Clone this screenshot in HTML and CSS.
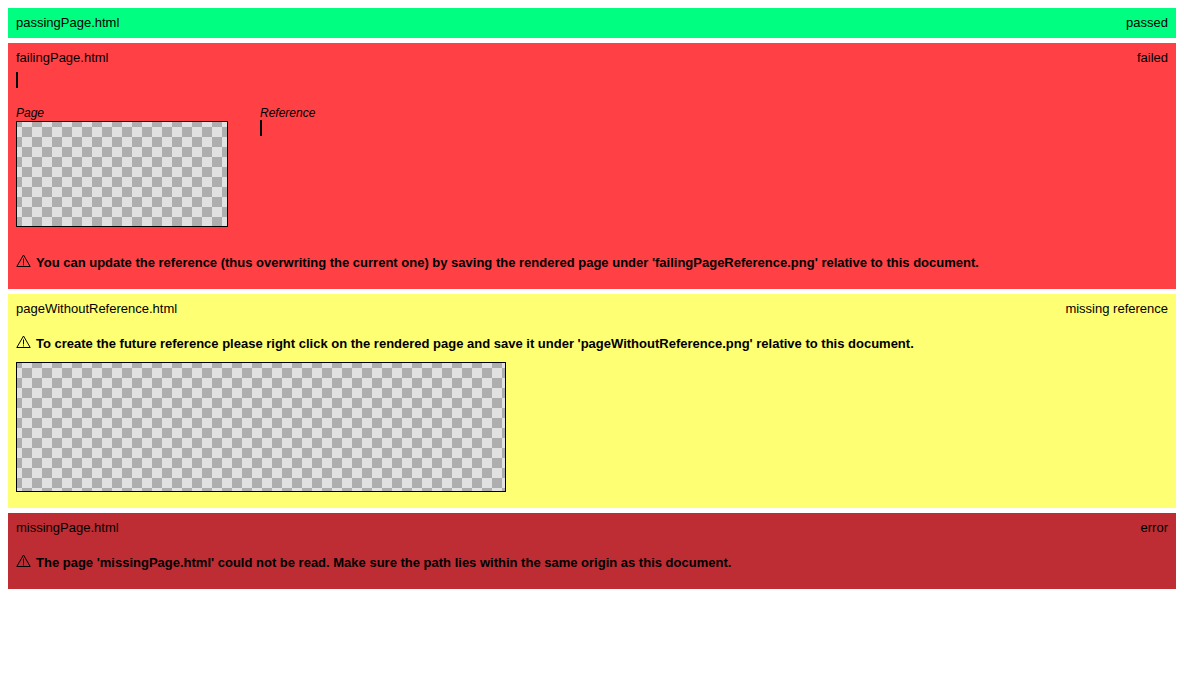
FILE: index.html
```html
<!DOCTYPE html>
<html lang="en">
<head>
<meta charset="utf-8">
<title>Test results</title>
<link rel="stylesheet" href="styles.css">
</head>
<body>
<main class="results">
  <section class="result passed">
    <header class="head"><span>passingPage.html</span><span>passed</span></header>
  </section>
  <section class="result failed">
    <header class="head"><span>failingPage.html</span><span>failed</span></header>
    <div class="diff"><div class="empty"></div></div>
    <div class="pair">
      <figure class="shot"><figcaption>Page</figcaption><div class="canvas small"></div></figure>
      <figure class="shot"><figcaption>Reference</figcaption><div class="empty"></div></figure>
    </div>
    <p class="note"><svg class="warn" viewBox="0 0 15 14" aria-hidden="true"><path d="M7.5 1 L14.2 12.5 H.8 Z M7.5 4.5 V9.5 M7.5 10.4 V11.4"/></svg><span>You can update the reference (thus overwriting the current one) by saving the rendered page under 'failingPageReference.png' relative to this document.</span></p>
  </section>
  <section class="result missing">
    <header class="head"><span>pageWithoutReference.html</span><span>missing reference</span></header>
    <p class="note"><svg class="warn" viewBox="0 0 15 14" aria-hidden="true"><path d="M7.5 1 L14.2 12.5 H.8 Z M7.5 4.5 V9.5 M7.5 10.4 V11.4"/></svg><span>To create the future reference please right click on the rendered page and save it under 'pageWithoutReference.png' relative to this document.</span></p>
    <div class="canvas large"></div>
  </section>
  <section class="result error">
    <header class="head"><span>missingPage.html</span><span>error</span></header>
    <p class="note"><svg class="warn" viewBox="0 0 15 14" aria-hidden="true"><path d="M7.5 1 L14.2 12.5 H.8 Z M7.5 4.5 V9.5 M7.5 10.4 V11.4"/></svg><span>The page 'missingPage.html' could not be read. Make sure the path lies within the same origin as this document.</span></p>
  </section>
</main>
</body>
</html>
```
FILE: styles.css
```css
* { box-sizing: border-box; }
body {
  margin: 8px;
  font: 13px/14px "Liberation Sans", Arial, sans-serif;
  color: #000;
  background: #fff;
}
.results { display: flex; flex-direction: column; gap: 5px; }
.result { padding: 8px; }
.passed { background: #00ff80; }
.failed { background: #ff4044; }
.missing { background: #ffff73; padding-bottom: 16px; }
.error { background: #bd2d33; }
.head { display: flex; justify-content: space-between; }
.diff { padding-top: 7px; }
.empty { width: 2px; height: 16px; background: #000; }
.pair { display: flex; gap: 32px; margin-top: 19px; }
.shot { display: flow-root; margin: 0; }
.shot figcaption { font-size: 12px; line-height: 13px; font-style: italic; }
.shot .canvas { margin-top: 1px; }
.canvas {
  border: 1px solid #000;
  max-width: 100%;
  background: repeating-conic-gradient(#e1e1e1 0 25%, #aeaeae 0 50%) 5px 5px / 20px 20px;
}
.small { width: 212px; height: 106px; }
.large { width: 490px; height: 130px; }
.note {
  display: flex;
  align-items: flex-start;
  gap: 5px;
  margin: 19px 0 9px;
  font-weight: bold;
  line-height: 18px;
}
.failed .note { margin-top: 27px; }
.warn {
  flex: none;
  width: 15px;
  height: 14px;
  fill: none;
  stroke: #000;
  stroke-width: 1;
}
```
